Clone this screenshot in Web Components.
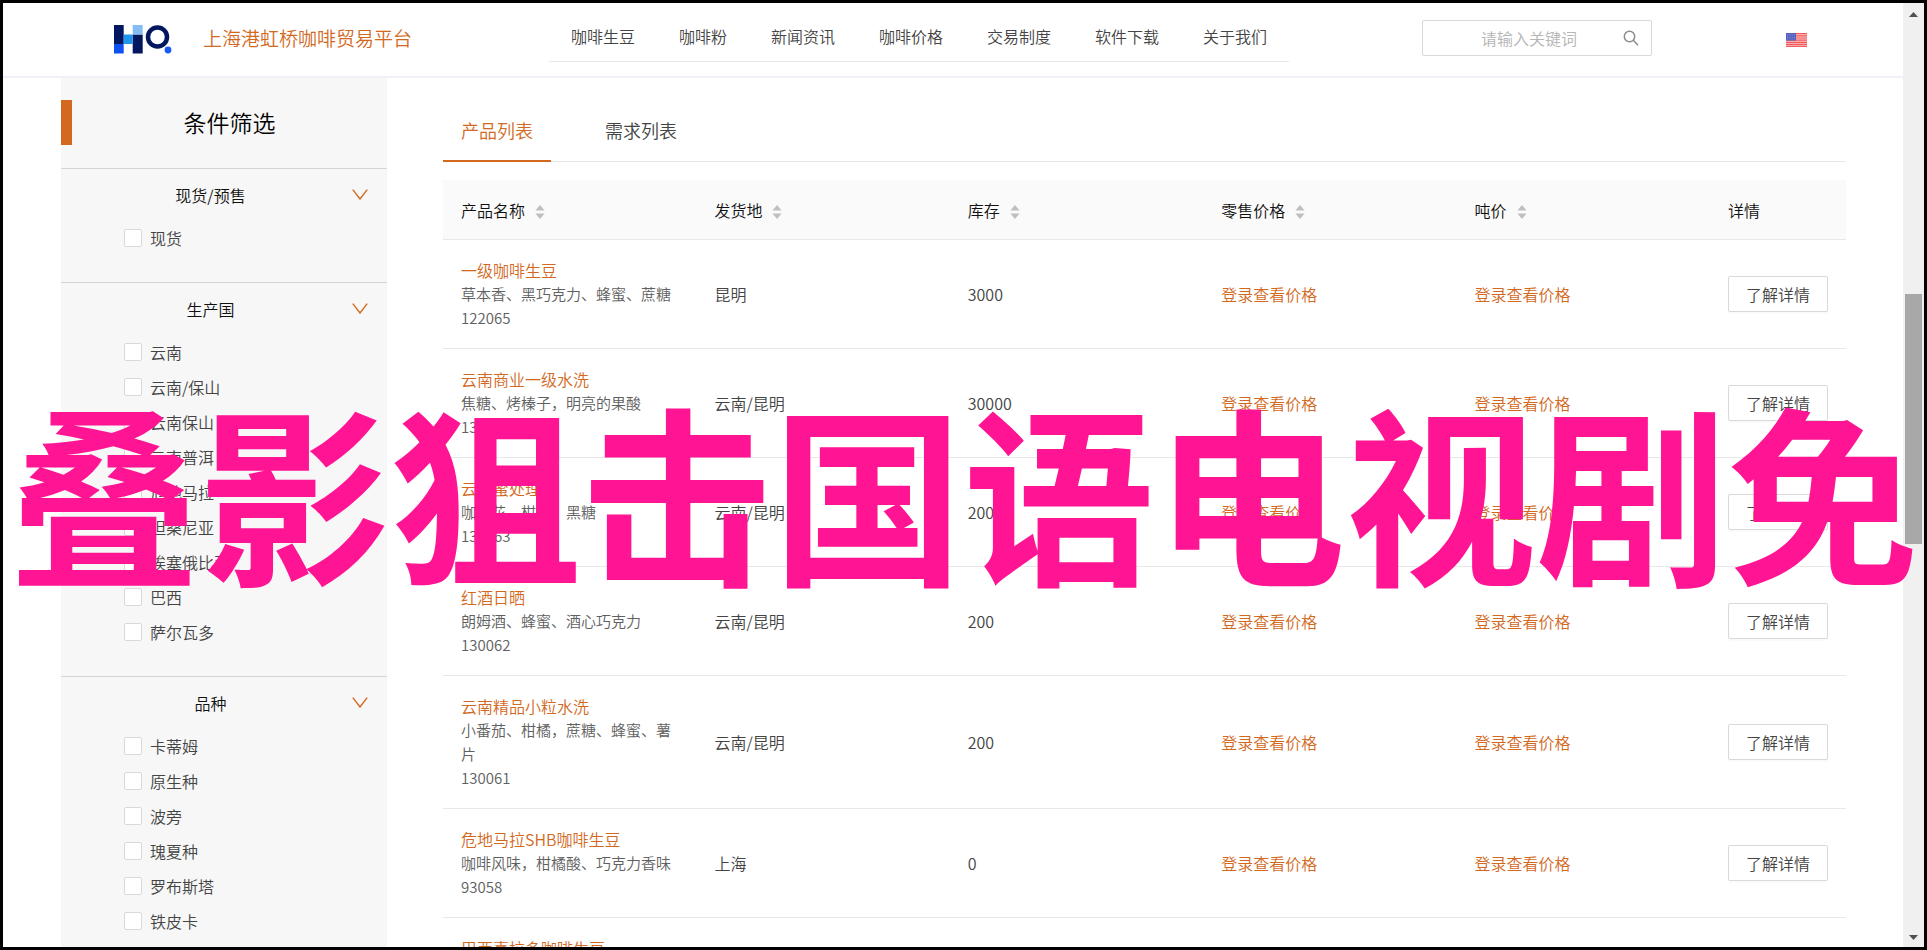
<!DOCTYPE html>
<html lang="zh-CN">
<head>
<meta charset="utf-8">
<meta name="viewport" content="width=device-width, initial-scale=1">
<title>上海港虹桥咖啡贸易平台</title>
<style>
  :root {
    --accent: #d2691e;
    --ink: #111;
    --text: #444;
    --line: #e8e8e8;
  }
  body {
    margin: 0;
    font: 350 16px/24px "Noto Sans CJK SC", sans-serif;
    color: var(--text);
  }
</style>
</head>
<body>
<coffee-app></coffee-app>

<script>
const define = (name, html, setup) => {
  const template = document.createElement('template');
  template.innerHTML = html;
  customElements.define(name, class extends HTMLElement {
    constructor() {
      super();
      this.attachShadow({ mode: 'open' }).append(template.content.cloneNode(true));
    }
    connectedCallback() {
      if (setup && !this.ready) { this.ready = true; setup(this, this.shadowRoot); }
    }
  });
};

/* Brand mark */
define('brand-logo', `
  <style>
    :host { display: block; width: 58px; height: 30px; }
    svg { display: block; }
  </style>
  <svg width="58" height="30" viewBox="0 0 58 30" role="img" aria-label="HQ">
    <path fill="#02175f" d="M0 0h9.700v19H0zM18.700 9.500h10v19h-10z"/>
    <path fill="#0f50f0" d="M0 19h9.700v9.500H0z"/>
    <path fill="#85bdf3" d="M18.700 0h10v9.500h-10z"/>
    <path fill="#1f95ee" d="M9.700 9.500h9V19h-9z"/>
    <circle cx="43.500" cy="12" r="9.500" fill="none" stroke="#02175f" stroke-width="4.500"/>
    <circle cx="54" cy="25" r="3.400" fill="#1a5af5"/>
  </svg>`);

/* Main menu */
define('main-nav', `
  <style>
    :host { display: block; border-bottom: 1px solid var(--line); }
    nav { display: flex; padding-bottom: 2px; }
    a { padding: 0 22px; line-height: 46px; color: inherit; text-decoration: none; white-space: nowrap; }
  </style>
  <nav></nav>`, (host, root) => {
  const nav = root.querySelector('nav');
  host.getAttribute('items').split(' ').forEach(item => {
    const link = document.createElement('a');
    link.href = '#';
    link.textContent = item;
    nav.append(link);
  });
});

/* Keyword search */
define('search-box', `
  <style>
    :host { display: block; width: 230px; }
    form {
      display: flex; align-items: center; box-sizing: border-box; height: 36px;
      padding: 0 12px; border: 1px solid #d9d9d9; border-radius: 2px; background: #fff;
    }
    input {
      flex: 1; min-width: 0; padding: 0; border: 0; outline: 0; background: none;
      font: inherit; color: inherit; text-align: center;
    }
    input::placeholder { color: #b4b4b4; opacity: 1; }
    button { display: flex; padding: 0; border: 0; background: none; }
  </style>
  <form>
    <input type="text" placeholder="请输入关键词" aria-label="请输入关键词">
    <button type="button" aria-label="搜索">
      <svg width="16" height="16" viewBox="0 0 16 16" fill="none" stroke="#8c8c8c" stroke-width="1.500">
        <circle cx="6.500" cy="6.500" r="5.200"/><path d="M10.300 10.300 15 15.200"/>
      </svg>
    </button>
  </form>`);

/* Language switch */
define('lang-switch', `
  <style>
    :host { display: block; }
    button { display: flex; padding: 0; border: 0; background: none; }
  </style>
  <button type="button" aria-label="English">
    <svg width="21" height="14" viewBox="0 0 21 14">
      <path fill="#fbc9c9" d="M0 0h21v14H0z"/>
      <path stroke="#f4595b" stroke-width="1.200" d="M0 .6h21M0 2.800h21M0 5h21M0 7.200h21M0 9.300h21M0 11.400h21M0 13.400h21"/>
      <path fill="#5560bd" d="M0 0h10v7.600H0z"/>
      <path stroke="#8f97dd" stroke-width=".7" stroke-dasharray=".8 1" d="M1 1.500h8M1 3h8M1 4.500h8M1 6h8"/>
    </svg>
  </button>`);

define('site-header', `
  <style>
    :host { display: block; border-bottom: 2px solid #f0f0f8; }
    header { display: flex; align-items: center; height: 73px; padding-left: 111px; }
    .name { margin-left: 31px; color: var(--accent); font-size: 19px; text-decoration: none; white-space: nowrap; }
    .name, main-nav, search-box { margin-bottom: 4px; }
    main-nav { margin-left: 137px; }
    search-box { margin-left: 133px; }
    lang-switch { margin-left: 134px; }
  </style>
  <header>
    <brand-logo></brand-logo>
    <a class="name" href="#">上海港虹桥咖啡贸易平台</a>
    <main-nav items="咖啡生豆 咖啡粉 新闻资讯 咖啡价格 交易制度 软件下载 关于我们"></main-nav>
    <search-box></search-box>
    <lang-switch></lang-switch>
  </header>`);

define('filter-group', `
  <style>
    :host { display: block; border-top: 1px solid #d4d4d4; padding-bottom: 27px; }
    button {
      display: flex; align-items: center; width: 100%; height: 51px; padding: 0 19px 0 0;
      border: 0; background: none; font: inherit; color: var(--ink);
    }
    span { flex: 1; padding-left: 8px; text-align: center; }
    label { display: flex; align-items: center; gap: 8px; height: 35px; padding-left: 63px; }
    input {
      appearance: none; box-sizing: border-box; width: 18px; height: 18px; margin: 0;
      border: 1px solid #d9d9d9; border-radius: 2px; background: #fff;
    }
    input:checked { background: var(--accent); }
  </style>
  <button type="button" aria-expanded="true">
    <span><slot name="title"></slot></span>
    <svg width="16" height="11" viewBox="0 0 16 11" fill="none" stroke="var(--accent)" stroke-width="1.400"><path d="M.8.6 8 10 15.200.6"/></svg>
  </button>
  <div class="list"></div>`, (host, root) => {
  const list = root.querySelector('.list');
  host.getAttribute('options').split(' ').forEach(option => {
    const label = document.createElement('label');
    const box = document.createElement('input');
    box.type = 'checkbox';
    label.append(box, option);
    list.append(label);
  });
});

define('filter-panel', `
  <style>
    :host { display: block; flex: 0 0 326px; background: #f7f7f7; }
    h2 {
      display: flex; align-items: center; height: 45px; margin: 0; padding: 22px 0 23px;
      font-size: 23px; font-weight: inherit; color: #000;
    }
    h2::before { content: ""; width: 11px; height: 45px; background: var(--accent); }
    h2 span { flex: 1; padding-bottom: 2px; text-align: center; }
  </style>
  <aside>
    <h2><span>条件筛选</span></h2>
    <filter-group options="现货"><span slot="title">现货/预售</span></filter-group>
    <filter-group options="云南 云南/保山 云南保山 云南普洱 危地马拉 坦桑尼亚 埃塞俄比亚 巴西 萨尔瓦多"><span slot="title">生产国</span></filter-group>
    <filter-group options="卡蒂姆 原生种 波旁 瑰夏种 罗布斯塔 铁皮卡"><span slot="title">品种</span></filter-group>
  </aside>`);

define('list-tabs', `
  <style>
    :host { display: block; }
    div { display: flex; gap: 36px; border-bottom: 1px solid var(--line); }
    button {
      padding: 0 18px; margin-bottom: -1px; border: 0; border-bottom: 2px solid transparent;
      background: none; font: inherit; font-size: 18px; line-height: 60px; color: inherit;
    }
    [aria-selected=true] { color: var(--accent); border-color: var(--accent); }
  </style>
  <div role="tablist">
    <button type="button" role="tab" aria-selected="true">产品列表</button>
    <button type="button" role="tab" aria-selected="false">需求列表</button>
  </div>`);

define('sort-arrows', `
  <style>
    :host { display: inline-block; margin-left: 10px; vertical-align: middle; }
    svg { display: block; }
  </style>
  <svg width="10" height="14" viewBox="0 0 10 14" fill="#bfbfbf"><path d="M5 0 9.600 5.500H.4zM5 14 .4 8.500h9.200z"/></svg>`);

const products = [
  ['一级咖啡生豆', '草本香、黑巧克力、蜂蜜、蔗糖', '122065', '昆明', '3000'],
  ['云南商业一级水洗', '焦糖、烤榛子，明亮的果酸', '130064', '云南/昆明', '30000'],
  ['云南蜜处理', '咖啡花、柑橘、黑糖', '130063', '云南/昆明', '200'],
  ['红酒日晒', '朗姆酒、蜂蜜、酒心巧克力', '130062', '云南/昆明', '200'],
  ['云南精品小粒水洗', '小番茄、柑橘，蔗糖、蜂蜜、薯片', '130061', '云南/昆明', '200'],
  ['危地马拉SHB咖啡生豆', '咖啡风味，柑橘酸、巧克力香味', '93058', '上海', '0'],
  ['巴西喜拉多咖啡生豆', '坚果、巧克力', '93057', '上海', '0']
];

define('product-table', `
  <style>
    :host { display: block; margin-top: 18px; }
    table { width: 100%; table-layout: fixed; border-collapse: separate; border-spacing: 0; }
    .last { width: 136px; }
    th, td { box-sizing: border-box; padding: 18px; border-bottom: 1px solid var(--line); text-align: left; vertical-align: middle; }
    th { height: 60px; padding: 16px 18px; background: #fafafa; font-weight: inherit; color: var(--ink); white-space: nowrap; }
    td p { margin: 0; font-size: 15px; color: #606060; }
    a { color: var(--accent); text-decoration: none; }
    td > a { display: block; }
    button {
      display: block; width: 100%; height: 36px; padding: 0; border: 1px solid #d9d9d9; border-radius: 2px;
      background: #fff; box-shadow: 0 2px 0 rgba(0, 0, 0, .02); font: inherit; color: inherit; white-space: nowrap;
    }
  </style>
  <table>
    <colgroup><col><col><col><col><col><col class="last"></colgroup>
    <thead>
      <tr>
        <th>产品名称<sort-arrows></sort-arrows></th>
        <th>发货地<sort-arrows></sort-arrows></th>
        <th>库存<sort-arrows></sort-arrows></th>
        <th>零售价格<sort-arrows></sort-arrows></th>
        <th>吨价<sort-arrows></sort-arrows></th>
        <th>详情</th>
      </tr>
    </thead>
    <tbody></tbody>
  </table>`, (host, root) => {
  root.querySelector('tbody').innerHTML = products.map(([name, notes, code, place, stock]) => `
    <tr>
      <td><a href="#">${name}</a><p>${notes}</p><p>${code}</p></td>
      <td>${place}</td>
      <td>${stock}</td>
      <td><a href="#">登录查看价格</a></td>
      <td><a href="#">登录查看价格</a></td>
      <td><button type="button">了解详情</button></td>
    </tr>`).join('');
});

/* Scroll track drawn beside the page */
define('scroll-track', `
  <style>
    :host {
      display: flex; flex-direction: column; align-items: center; flex: 0 0 21px; box-sizing: border-box;
      padding: 9px 0 7px; background: #f0f0f0;
    }
    .thumb { width: 17px; flex: 0 0 27%; background: #a8a8a8; }
    .above { flex: 273; }
    .below { flex: 386; }
    svg { display: block; }
  </style>
  <svg width="9" height="5" viewBox="0 0 9 5" fill="#505050"><path d="M4.500 0 9 5H0z"/></svg>
  <div class="above"></div>
  <div class="thumb"></div>
  <div class="below"></div>
  <svg width="9" height="5" viewBox="0 0 9 5" fill="#505050"><path d="M4.500 5 0 0h9z"/></svg>`);

/* Large caption lying over the page */
define('overlay-caption', `
  <style>
    :host {
      position: absolute; inset: 0; display: flex; align-items: center; justify-content: center;
      padding-top: 24px; pointer-events: none; white-space: nowrap;
      font-size: 191px; line-height: 191px; font-weight: 700; color: #ff1493;
    }
  </style>
  <slot></slot>`);

define('coffee-app', `
  <style>
    :host {
      position: relative; display: flex; box-sizing: border-box; height: 100vh;
      border: 3px solid #000; background: #fff; overflow: hidden;
    }
    .view { flex: 1; min-width: 0; overflow-y: auto; scrollbar-width: none; }
    .body { display: flex; align-items: flex-start; gap: 56px; padding: 0 57px 0 58px; }
    main { flex: 1; min-width: 0; padding-top: 22px; }
  </style>
  <div class="view">
    <site-header></site-header>
    <div class="body">
      <filter-panel></filter-panel>
      <main>
        <list-tabs></list-tabs>
        <product-table></product-table>
      </main>
    </div>
  </div>
  <scroll-track></scroll-track>
  <overlay-caption>叠影狙击国语电视剧免</overlay-caption>`);
</script>
</body>
</html>
